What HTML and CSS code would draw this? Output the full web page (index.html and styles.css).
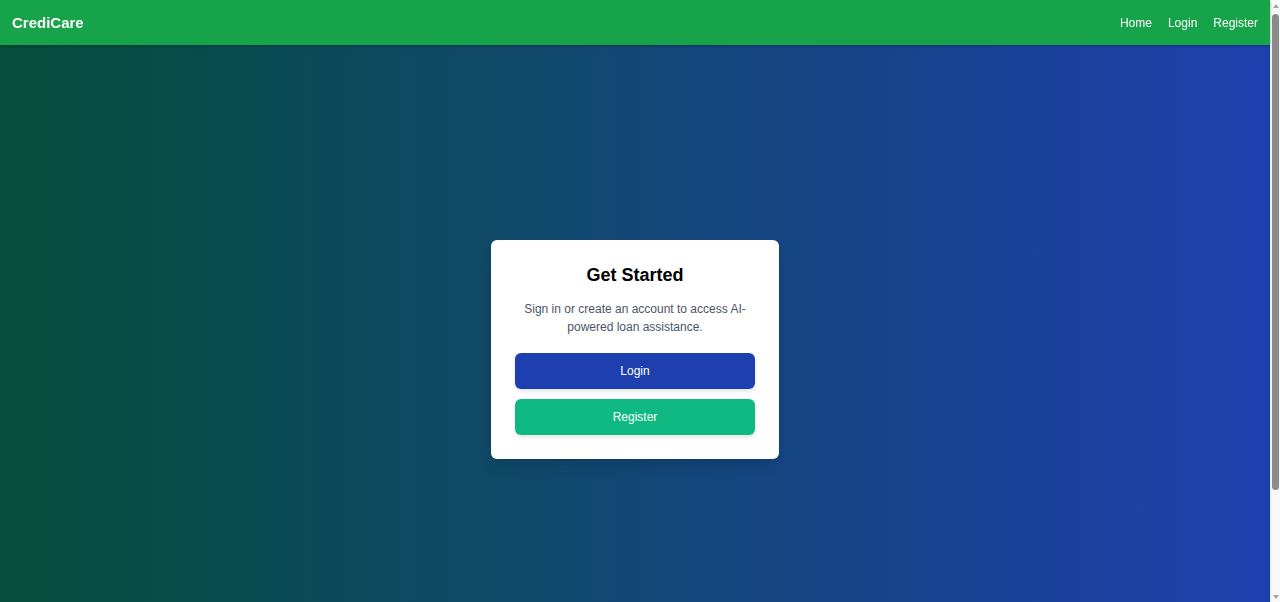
FILE: index.html
```html
<!DOCTYPE html>
<html lang="en">
<head>
<meta charset="utf-8">
<title>CrediCare</title>
<link rel="stylesheet" href="styles.css">
</head>
<body>
<div class="page">
  <nav class="navbar">
    <a class="brand" href="#">CrediCare</a>
    <div class="nav-links">
      <a href="#">Home</a>
      <a href="#">Login</a>
      <a href="#">Register</a>
    </div>
  </nav>
  <main class="hero">
    <div class="card">
      <h1 class="card-title">Get Started</h1>
      <p class="card-text">Sign in or create an account to access AI-powered loan assistance.</p>
      <div class="actions">
        <a class="btn btn-login" href="#">Login</a>
        <a class="btn btn-register" href="#">Register</a>
      </div>
    </div>
  </main>
  <footer class="footer"></footer>
</div>
<div class="scrollbar" aria-hidden="true">
  <span class="sb-arrow sb-up"></span>
  <span class="sb-thumb"></span>
  <span class="sb-arrow sb-down"></span>
</div>
</body>
</html>
```

FILE: styles.css
```css
* { box-sizing: border-box; }
html, body { margin: 0; padding: 0; }
body {
  font-family: "Liberation Sans", Arial, sans-serif;
  background: #f8f8f8;
}
a { text-decoration: none; color: inherit; }

.page {
  width: calc(100% - 10px);
  background: linear-gradient(to right, #064e3b, #1e40af);
}

.navbar {
  height: 45px;
  background: #16a34a;
  display: flex;
  align-items: center;
  justify-content: space-between;
  padding: 0 12px;
  color: #fff;
  box-shadow: 0 1px 3px rgba(0,0,0,0.25);
  position: relative;
  z-index: 1;
}
.brand {
  font-weight: bold;
  font-size: 15px;
}
.nav-links {
  display: flex;
  gap: 16px;
  font-size: 12px;
}

.hero {
  min-height: calc(100vh + 7px);
  display: flex;
  align-items: center;
  justify-content: center;
}
.card {
  width: 288px;
  background: #fff;
  border-radius: 6px;
  padding: 23px 24px 24px;
  text-align: center;
  box-shadow: 0 10px 15px -3px rgba(0,0,0,0.1), 0 4px 6px -4px rgba(0,0,0,0.1);
}
.card-title {
  margin: 0;
  font-size: 18px;
  line-height: 24px;
  font-weight: bold;
  color: #000;
}
.card-text {
  margin: 13px 0 0;
  font-size: 12px;
  line-height: 18px;
  color: #4b5563;
}
.actions {
  margin-top: 17px;
  display: flex;
  flex-direction: column;
  gap: 10px;
}
.btn {
  display: block;
  height: 36px;
  line-height: 36px;
  border-radius: 6px;
  color: #fff;
  font-size: 12px;
  box-shadow: 0 2px 4px rgba(0,0,0,0.12);
}
.btn-login { background: #1e40af; }
.btn-register { background: #10b981; }

.footer {
  height: 68px;
}

/* imitation of the browser's classic scrollbar seen in the reference */
.scrollbar {
  position: fixed;
  top: 0;
  right: 0;
  bottom: 0;
  width: 10px;
  background: #f8f8f8;
  border-left: 1px solid #ececec;
  display: flex;
  flex-direction: column;
  align-items: center;
}
.sb-arrow {
  width: 0;
  height: 0;
  border-left: 3.5px solid transparent;
  border-right: 3.5px solid transparent;
}
.sb-up {
  margin-top: 4px;
  border-bottom: 4px solid #a3a3a3;
}
.sb-down {
  margin-top: auto;
  margin-bottom: 3px;
  border-top: 4px solid #a3a3a3;
}
.sb-thumb {
  margin-top: 6px;
  width: 7px;
  height: 476px;
  border-radius: 4px;
  background: #8b8b8b;
}
```
